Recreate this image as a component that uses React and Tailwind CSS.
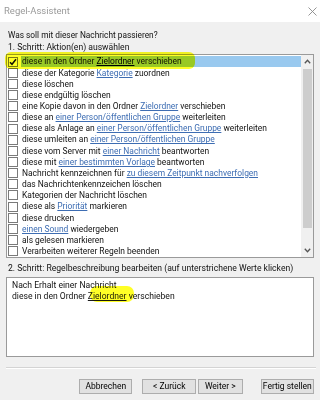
import React from "react";

const L = ({ children, sel }) => (
  <span className={sel ? "underline text-black" : "underline text-[#3d6db3]"}>{children}</span>
);

const items = [
  [<>diese in den Ordner <L sel>Zielordner</L> verschieben</>, true],
  [<>diese der Kategorie <L>Kategorie</L> zuordnen</>],
  [<>diese löschen</>],
  [<>diese endgültig löschen</>],
  [<>eine Kopie davon in den Ordner <L>Zielordner</L> verschieben</>],
  [<>diese an <L>einer Person/öffentlichen Gruppe</L> weiterleiten</>],
  [<>diese als Anlage an <L>einer Person/öffentlichen Gruppe</L> weiterleiten</>],
  [<>diese umleiten an <L>einer Person/öffentlichen Gruppe</L></>],
  [<>diese vom Server mit <L>einer Nachricht</L> beantworten</>],
  [<>diese mit <L>einer bestimmten Vorlage</L> beantworten</>],
  [<>Nachricht kennzeichnen für <L>zu diesem Zeitpunkt nachverfolgen</L></>],
  [<>das Nachrichtenkennzeichen löschen</>],
  [<>Kategorien der Nachricht löschen</>],
  [<>diese als <L>Priorität</L> markieren</>],
  [<>diese drucken</>],
  [<><L>einen Sound</L> wiedergeben</>],
  [<>als gelesen markieren</>],
  [<>Verarbeiten weiterer Regeln beenden</>],
];

function Check({ on }) {
  return (
    <div className="w-[10px] h-[10px] border border-[#7a7a7a] bg-white flex items-center justify-center shrink-0">
      {on && (
        <svg width="8" height="8" viewBox="0 0 8 8">
          <path d="M1 4.2 L3 6.3 L7 1.3" fill="none" stroke="#111" strokeWidth="1.5" />
        </svg>
      )}
    </div>
  );
}

function Btn({ w, children, ml }) {
  return (
    <div
      className={`h-[15px] border border-[#adadad] bg-[#e1e1e1] flex items-center justify-center text-[8.5px] text-black ${w} ${ml}`}
    >
      {children}
    </div>
  );
}

export default function App() {
  return (
    <div
      className="relative w-[320px] h-[400px] bg-[#f0f0f0] overflow-hidden text-[8.6px] text-[#111]"
      style={{ fontFamily: "Roboto, 'Noto Sans', sans-serif" }}
    >
      <div className="h-[22px] bg-white flex items-center justify-between pl-[4px] pr-[3px]">
        <span className="text-[9.5px] text-[#9a9a9a]">Regel-Assistent</span>
        <svg width="9" height="9" viewBox="0 0 9 9">
          <path d="M0.5 0.5 L8.5 8.5 M8.5 0.5 L0.5 8.5" stroke="#8a8a8a" strokeWidth="0.9" />
        </svg>
      </div>
      <div className="px-[6px] pt-[7px]">
        <div className="leading-[12px] pl-[2px] text-[8.3px]">Was soll mit dieser Nachricht passieren?</div>
        <div className="leading-[12px] pl-[2px]">1. Schritt: Aktion(en) auswählen</div>
        <div className="mt-[1px] w-[308px] h-[204px] border border-[#9a9a9a] bg-white flex">
          <div className="flex-1 pt-[1px] text-[8.45px]">
            {items.map(([c, sel], i) => (
              <div key={i} className="h-[11.17px] flex items-center pl-[1px] whitespace-nowrap">
                <Check on={sel} />
                <div
                  className={`ml-[3px] flex-1 h-full flex items-center pl-[1px] leading-none ${
                    sel ? "bg-[#99c9ef]" : ""
                  }`}
                >
                  <span>{c}</span>
                </div>
              </div>
            ))}
          </div>
          <div className="w-[12px] bg-[#f0f0f0] flex flex-col items-center">
            <div className="h-[13px] flex items-center justify-center">
              <svg width="7" height="5" viewBox="0 0 7 5">
                <path d="M0.8 4.2 L3.5 1.2 L6.2 4.2" fill="none" stroke="#555" strokeWidth="1.3" />
              </svg>
            </div>
            <div className="w-[9px] h-[159px] mt-[1px] bg-[#cdcdcd]" />
            <div className="flex-1" />
            <div className="h-[13px] flex items-center justify-center">
              <svg width="7" height="5" viewBox="0 0 7 5">
                <path d="M0.8 0.8 L3.5 3.8 L6.2 0.8" fill="none" stroke="#555" strokeWidth="1.3" />
              </svg>
            </div>
          </div>
        </div>
        <div className="mt-[4px] leading-[12px] pl-[2px]">
          2. Schritt: Regelbeschreibung bearbeiten (auf unterstrichene Werte klicken)
        </div>
        <div className="mt-[3px] w-[308px] h-[80px] border border-[#9a9a9a] bg-white pl-[5px] pt-[2px]">
          <div className="leading-[11px]">Nach Erhalt einer Nachricht</div>
          <div className="leading-[11px]">
            diese in den Ordner <span className="underline text-[#1a1a1a]">Zielordner</span> verschieben
          </div>
        </div>
        <div className="mt-[10px] h-px bg-[#d4d4d4] w-[310px]" />
        <div className="h-px bg-white w-[310px]" />
        <div className="mt-[10px] flex">
          <Btn w="w-[54px]" ml="ml-[73px]">Abbrechen</Btn>
          <Btn w="w-[54px]" ml="ml-[10px]">&lt; Zurück</Btn>
          <Btn w="w-[45px]" ml="ml-[2px]">Weiter &gt;</Btn>
          <Btn w="w-[54px]" ml="ml-[18px]">Fertig stellen</Btn>
        </div>
      </div>
      <div className="absolute left-[5px] top-[52px] w-[190px] h-[17px] rounded-[6px] bg-[#ffff00] mix-blend-multiply opacity-85" />
      <div className="absolute left-[90px] top-[286px] w-[44px] h-[16px] rounded-[7px] bg-[#ffff00] mix-blend-multiply opacity-85" />
    </div>
  );
}
